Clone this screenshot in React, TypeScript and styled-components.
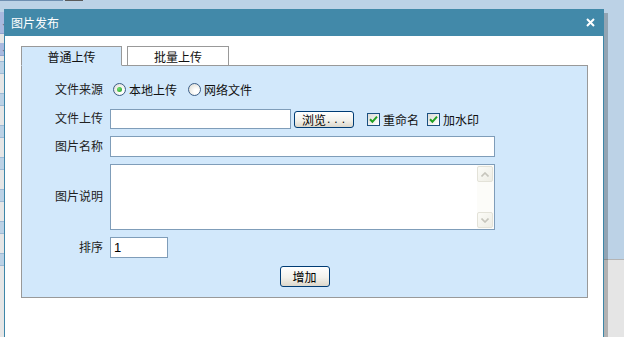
import React from "react";
import styled, { createGlobalStyle } from "styled-components";

const Global = createGlobalStyle`
  html, body { margin: 0; padding: 0; }
  body {
    font-family: "Liberation Sans", "Noto Sans CJK SC", sans-serif;
    font-size: 12px;
    overflow: hidden;
    background: #e5e5e5;
  }
`;

const Screen = styled.div`
  position: relative;
  width: 624px;
  height: 337px;
  overflow: hidden;
`;

/* ---------- page behind the dialog ---------- */
const Backdrop = styled.div`
  display: flex;
  flex-direction: column;
  height: 100%;
  background: #bcd2e6;
`;

const TopLine = styled.div`
  display: flex;
  gap: 2px;
  height: 1px;
`;

const TopSeg = styled.span<{ $w: number; $c: string }>`
  width: ${(p) => p.$w}px;
  background: ${(p) => p.$c};
`;

const BackBody = styled.div`
  display: flex;
  flex: 1;
`;

const LeftColumn = styled.div`
  width: 40px;
  display: flex;
  flex-direction: column;
  background: #e6e6e6;
`;

const ColCap = styled.div<{ $h: number }>`
  height: ${(p) => p.$h}px;
  background: #bcd2e6;
`;

const NavCell = styled.div<{ $h: number }>`
  height: ${(p) => p.$h}px;
  background: #a9b9df;
  border-bottom: 1px solid #8fa3cf;
  display: flex;
  align-items: center;
  padding-left: 1px;
  color: #4a5a7a;
  font-size: 9px;
`;

const ColGap = styled.div<{ $h: number }>`
  height: ${(p) => p.$h}px;
`;

const GridRow = styled.div`
  height: 32px;
  display: flex;
  flex-direction: column;
`;

const GridCell = styled.div`
  height: 11px;
  background: #bcd2e6;
  border-top: 1px solid #9dbad6;
  border-bottom: 1px solid #9dbad6;
`;

const MainArea = styled.div`
  flex: 1;
  display: flex;
  flex-direction: column;
`;

const BlueZone = styled.div`
  height: 258px;
  background: #bcd2e6;
`;

const GrayZone = styled.div`
  flex: 1;
  background: #e5e5e5;
  border-top: 1px solid #b4b4b4;
`;

/* ---------- dialog ---------- */
const Dialog = styled.div`
  position: absolute;
  left: 4px;
  top: 9px;
  width: 600px;
  bottom: -20px;
  box-sizing: border-box;
  background: #fff;
  border-left: 1px solid #3d86a8;
  border-right: 1px solid #3d86a8;
  box-shadow: 4px 4px 0 rgba(0, 0, 0, 0.22);
  display: flex;
  flex-direction: column;
`;

const TitleBar = styled.div`
  height: 27px;
  margin: 0 -1px;
  background: #4289a9;
  color: #fff;
  display: flex;
  align-items: center;
  justify-content: space-between;
  padding: 0 9px 0 7px;
  font-size: 12px;
`;

const CloseIcon = styled.svg`
  width: 9px;
  height: 9px;
  display: block;
`;

const DialogBody = styled.div`
  padding: 10px 15px 0 16px;
`;

const TabBar = styled.div`
  display: flex;
  gap: 5px;
  position: relative;
  z-index: 1;
  margin-bottom: -1px;
`;

const Tab = styled.div<{ $active?: boolean; $w: number }>`
  width: ${(p) => p.$w}px;
  height: 20px;
  box-sizing: border-box;
  border: 1px solid #999;
  border-bottom-color: ${(p) => (p.$active ? "#d2e8fb" : "#999")};
  background: ${(p) => (p.$active ? "#d2e8fb" : "#fff")};
  display: flex;
  align-items: center;
  justify-content: center;
  color: #111;
  font-size: 12px;
`;

const Panel = styled.div`
  border: 1px solid #999;
  background: #d2e8fb;
  padding: 12px 0 10px;
  display: flex;
  flex-direction: column;
  gap: 7px;
`;

const Row = styled.div<{ $h: number; $mb?: number }>`
  display: grid;
  grid-template-columns: 88px 1fr;
  align-items: center;
  height: ${(p) => p.$h}px;
  margin-bottom: ${(p) => p.$mb ?? 0}px;
`;

const Label = styled.div`
  text-align: right;
  padding-right: 7px;
  color: #222;
  font-size: 12px;
  line-height: 14px;
`;

const Controls = styled.div`
  display: flex;
  align-items: center;
`;

const TextInput = styled.input<{ $w: number; $h: number }>`
  width: ${(p) => p.$w}px;
  height: ${(p) => p.$h}px;
  box-sizing: border-box;
  border: 1px solid #7f9db9;
  background: #fff;
  padding: 0 3px;
  margin: 0;
  font-family: "Liberation Sans", sans-serif;
  font-size: 13px;
  color: #000;
  outline: none;
`;

const XPButton = styled.button<{ $w: number; $h: number; $ml?: number }>`
  width: ${(p) => p.$w}px;
  height: ${(p) => p.$h}px;
  margin: 0 0 0 ${(p) => p.$ml ?? 0}px;
  padding: 0;
  box-sizing: border-box;
  border: 1px solid #003c74;
  border-radius: 3px;
  background: linear-gradient(#ffffff, #f3f2ec 55%, #dcd7cb);
  font-family: "Liberation Sans", "Noto Sans CJK SC", sans-serif;
  font-size: 12px;
  color: #000;
  display: flex;
  align-items: center;
  justify-content: ${(p) => (p.$w > 55 ? "flex-start" : "center")};
  padding-left: ${(p) => (p.$w > 55 ? 7 : 0)}px;
`;

const Dots = styled.span`
  letter-spacing: 4px;
  margin-left: 1px;
`;

const RadioGroup = styled.div`
  display: flex;
  align-items: center;
  gap: 11px;
  margin-left: 3px;
`;

const Choice = styled.label`
  display: flex;
  align-items: center;
  gap: 3px;
  color: #111;
  font-size: 12px;
`;

const RadioCircle = styled.span<{ $checked?: boolean }>`
  width: 13px;
  height: 13px;
  box-sizing: border-box;
  border-radius: 50%;
  border: 1px solid #3c5d86;
  background: radial-gradient(circle at 65% 65%, #ffffff 20%, #dedcd3 90%);
  display: flex;
  align-items: center;
  justify-content: center;
  &::after {
    content: "";
    display: ${(p) => (p.$checked ? "block" : "none")};
    width: 5px;
    height: 5px;
    border-radius: 50%;
    background: radial-gradient(circle at 35% 35%, #6fe06f, #1f9a1f);
  }
`;

const CheckGroup = styled.div<{ $ml: number }>`
  margin-left: ${(p) => p.$ml}px;
`;

const CheckBox = styled.span`
  width: 13px;
  height: 13px;
  box-sizing: border-box;
  border: 1px solid #1c5180;
  background: linear-gradient(135deg, #dcdcd6, #ffffff);
  display: flex;
  align-items: center;
  justify-content: center;
`;

const TextAreaBox = styled.div`
  width: 385px;
  height: 66px;
  box-sizing: border-box;
  border: 1px solid #7f9db9;
  background: #fff;
  display: flex;
`;

const TextArea = styled.textarea`
  flex: 1;
  border: none;
  resize: none;
  outline: none;
  margin: 0;
  padding: 2px;
  background: transparent;
  overflow: hidden;
  font-family: "Liberation Sans", sans-serif;
  font-size: 13px;
`;

const ScrollTrack = styled.div`
  width: 17px;
  box-sizing: border-box;
  padding: 1px 1px 1px 0;
  background: #fcfcf9;
  display: flex;
  flex-direction: column;
  justify-content: space-between;
`;

const ScrollButton = styled.div`
  width: 16px;
  height: 16px;
  box-sizing: border-box;
  border: 1px solid #e3e2d8;
  border-radius: 2px;
  background: linear-gradient(135deg, #fbfbf7, #eeede5);
  display: flex;
  align-items: center;
  justify-content: center;
`;

const ActionRow = styled.div`
  display: flex;
  justify-content: center;
  margin-top: 1px;
`;

const Chevron = ({ up }: { up?: boolean }) => (
  <svg width="8" height="5" viewBox="0 0 8 5">
    <path
      d={up ? "M0.5 4.5 L4 1 L7.5 4.5" : "M0.5 0.5 L4 4 L7.5 0.5"}
      fill="none"
      stroke="#c6c5bc"
      strokeWidth="1.6"
    />
  </svg>
);

const Check = () => (
  <svg width="9" height="9" viewBox="0 0 9 9">
    <path d="M1 4.3 L3.4 6.8 L8 1.6" fill="none" stroke="#21a121" strokeWidth="2" />
  </svg>
);

export default function App() {
  const gridRows = Array.from({ length: 7 });
  return (
    <>
      <Global />
      <Screen>
        <Backdrop>
          <TopLine>
            <TopSeg $w={63} $c="#6f8fb1" />
            <TopSeg $w={18} $c="#5a5a5a" />
          </TopLine>
          <BackBody>
            <LeftColumn>
              <ColCap $h={11} />
              <NavCell $h={21}>⌄</NavCell>
              <ColGap $h={9} />
              <NavCell $h={12}>⌄</NavCell>
              <ColGap $h={5} />
              {gridRows.map((_, i) => (
                <GridRow key={i}>
                  <GridCell />
                </GridRow>
              ))}
            </LeftColumn>
            <MainArea>
              <BlueZone />
              <GrayZone />
            </MainArea>
          </BackBody>
        </Backdrop>

        <Dialog>
          <TitleBar>
            <span>图片发布</span>
            <CloseIcon viewBox="0 0 9 9">
              <path d="M1 1 L8 8 M8 1 L1 8" stroke="#fff" strokeWidth="2" />
            </CloseIcon>
          </TitleBar>
          <DialogBody>
            <TabBar>
              <Tab $active $w={101}>普通上传</Tab>
              <Tab $w={102}>批量上传</Tab>
            </TabBar>
            <Panel>
              <Row $h={23} $mb={1}>
                <Label>文件来源</Label>
                <RadioGroup>
                  <Choice>
                    <RadioCircle $checked />
                    本地上传
                  </Choice>
                  <Choice>
                    <RadioCircle />
                    网络文件
                  </Choice>
                </RadioGroup>
              </Row>
              <Row $h={20}>
                <Label>文件上传</Label>
                <Controls>
                  <TextInput $w={181} $h={20} />
                  <XPButton $w={60} $h={17} $ml={3}>
                    浏览<Dots>...</Dots>
                  </XPButton>
                  <CheckGroup $ml={13}>
                    <Choice>
                      <CheckBox>
                        <Check />
                      </CheckBox>
                      重命名
                    </Choice>
                  </CheckGroup>
                  <CheckGroup $ml={8}>
                    <Choice>
                      <CheckBox>
                        <Check />
                      </CheckBox>
                      加水印
                    </Choice>
                  </CheckGroup>
                </Controls>
              </Row>
              <Row $h={21}>
                <Label>图片名称</Label>
                <Controls>
                  <TextInput $w={385} $h={21} />
                </Controls>
              </Row>
              <Row $h={66}>
                <Label>图片说明</Label>
                <Controls>
                  <TextAreaBox>
                    <TextArea />
                    <ScrollTrack>
                      <ScrollButton>
                        <Chevron up />
                      </ScrollButton>
                      <ScrollButton>
                        <Chevron />
                      </ScrollButton>
                    </ScrollTrack>
                  </TextAreaBox>
                </Controls>
              </Row>
              <Row $h={21}>
                <Label>排序</Label>
                <Controls>
                  <TextInput $w={58} $h={21} defaultValue="1" />
                </Controls>
              </Row>
              <ActionRow>
                <XPButton $w={50} $h={21}>增加</XPButton>
              </ActionRow>
            </Panel>
          </DialogBody>
        </Dialog>
      </Screen>
    </>
  );
}
